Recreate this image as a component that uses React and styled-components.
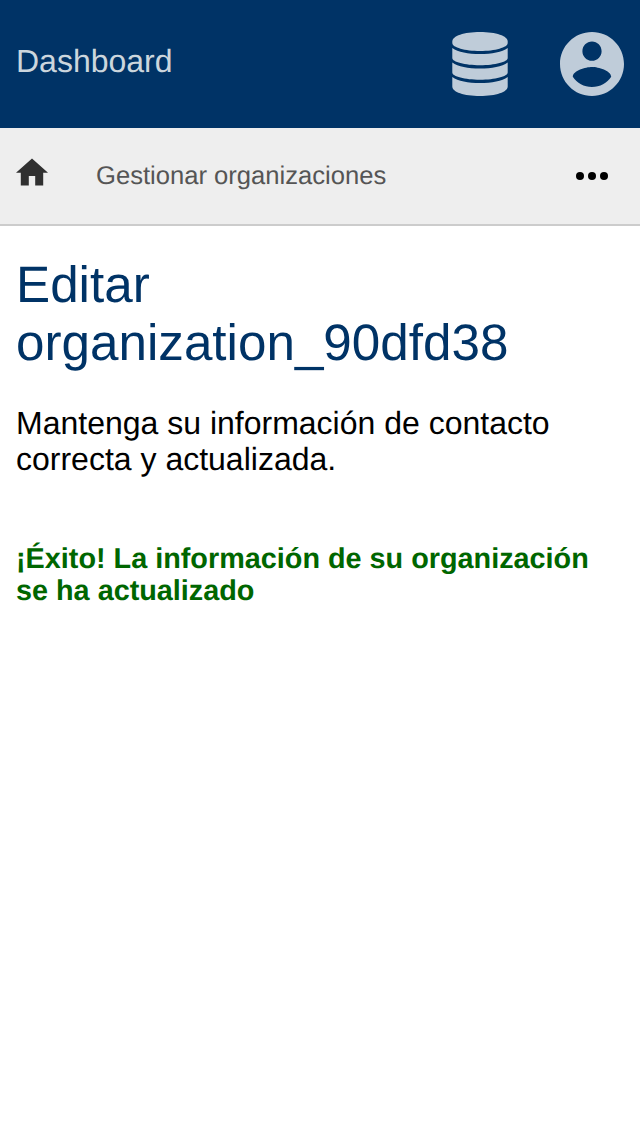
import React from "react";
import styled, { createGlobalStyle } from "styled-components";

const GlobalStyle = createGlobalStyle`
  * { box-sizing: border-box; }
  body {
    margin: 0;
    background: #fff;
    color: #000;
    font-family: "Liberation Sans", Arial, sans-serif;
    text-rendering: geometricPrecision;
  }
`;

const Header = styled.header`
  display: flex;
  align-items: center;
  height: 128px;
  padding: 0 16px;
  background: #036;
  color: #bfccd9;
`;

const Brand = styled.span`
  flex: 1;
  padding-bottom: 6px;
  font-size: 32px;
  line-height: 36px;
  color: #ccd6dd;
`;

const HeaderActions = styled.div`
  display: flex;
  align-items: center;
  gap: 48px;
`;

const IconButton = styled.button`
  display: flex;
  align-items: center;
  justify-content: center;
  width: 64px;
  height: 64px;
  padding: 0;
  border: 0;
  background: none;
  color: inherit;
`;

const SubNav = styled.nav`
  display: flex;
  align-items: center;
  height: 98px;
  padding: 0 32px 0 16px;
  background: #eee;
  border-bottom: 2px solid #ccc;
`;

const HomeLink = styled.a`
  display: flex;
  padding-bottom: 8px;
  color: #303030;
`;

const NavLink = styled.a`
  flex: 1;
  margin-left: 48px;
  font-size: 25.6px;
  line-height: 30px;
  color: #555;
`;

const MoreButton = styled.button`
  display: flex;
  padding: 0;
  border: 0;
  background: none;
  color: #000;
`;

const Icon = styled.svg`
  display: block;
  flex-shrink: 0;
  fill: currentColor;
`;

const Content = styled.main`
  padding: 30px 16px;
`;

const Title = styled.h1`
  margin: 0;
  font-size: 51.2px;
  font-weight: 400;
  line-height: 58px;
  color: #036;
`;

const Intro = styled.p`
  margin: 33px 0 0;
  font-size: 32px;
  line-height: 36px;
`;

const SuccessMessage = styled.p`
  margin: 66px 0 0;
  font-size: 28.8px;
  font-weight: 700;
  line-height: 32px;
  color: #060;
`;

function DatabaseIcon() {
  return (
    <Icon width="56" height="64" viewBox="0 0 56 64" aria-hidden="true">
      <path d="M.3 9.5C.3 4 12 0 28 0s27.7 4 27.7 9.5V11c0 4.5-12.7 8-27.7 8S.3 15.5.3 11z" />
      <path d="M.3 16C6 20 16 22 28 22s22-2 27.7-6v10c0 4-12.7 7.2-27.7 7.2S.3 30 .3 26z" />
      <path d="M.3 30.6c5.7 4 15.7 6 27.7 6s22-2 27.7-6v10c0 4-12.7 7.2-27.7 7.2S.3 44.6.3 40.6z" />
      <path d="M.3 45c5.7 4 15.7 6 27.7 6s22-2 27.7-6v9.5c0 5.5-11.7 9.5-27.7 9.5S.3 60 .3 54.500z" />
    </Icon>
  );
}

function AccountIcon() {
  return (
    <Icon width="64" height="64" viewBox="2 2 20 20" aria-hidden="true">
      <path d="M12 2C6.48 2 2 6.48 2 12s4.48 10 10 10 10-4.48 10-10S17.52 2 12 2zm0 3c1.66 0 3 1.34 3 3s-1.34 3-3 3-3-1.34-3-3 1.34-3 3-3zm0 14.2c-2.5 0-4.71-1.28-6-3.22.03-1.99 4-3.08 6-3.08 1.99 0 5.97 1.09 6 3.08-1.29 1.94-3.5 3.22-6 3.22z" />
    </Icon>
  );
}

function HomeIcon() {
  return (
    <Icon width="32" height="28" viewBox="2 2.75 20 17.5" aria-hidden="true">
      <path d="M10 20v-6h4v6h5v-8h3L12 3 2 12h3v8z" />
    </Icon>
  );
}

function MoreIcon() {
  return (
    <Icon width="32" height="8" viewBox="4 10 16 4" aria-hidden="true">
      <circle cx="6" cy="12" r="2" />
      <circle cx="12" cy="12" r="2" />
      <circle cx="18" cy="12" r="2" />
    </Icon>
  );
}

export default function App() {
  return (
    <>
      <GlobalStyle />
      <Header>
        <Brand>Dashboard</Brand>
        <HeaderActions>
          <IconButton aria-label="Datos"><DatabaseIcon /></IconButton>
          <IconButton aria-label="Cuenta"><AccountIcon /></IconButton>
        </HeaderActions>
      </Header>
      <SubNav>
        <HomeLink aria-label="Inicio"><HomeIcon /></HomeLink>
        <NavLink>Gestionar organizaciones</NavLink>
        <MoreButton aria-label="Más"><MoreIcon /></MoreButton>
      </SubNav>
      <Content>
        <Title>Editar organization_90dfd38</Title>
        <Intro>Mantenga su información de contacto correcta y actualizada.</Intro>
        <SuccessMessage>¡Éxito! La información de su organización se ha actualizado</SuccessMessage>
      </Content>
    </>
  );
}
